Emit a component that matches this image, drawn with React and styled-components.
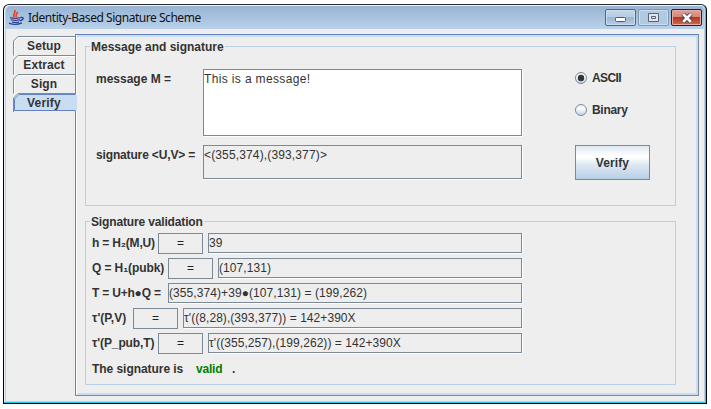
import React from "react";
import styled, { createGlobalStyle } from "styled-components";

const Global = createGlobalStyle`
  * { box-sizing: border-box; }
  body { margin: 0; background: #fff; overflow: hidden; }
`;

const Desktop = styled.div`
  width: 711px;
  height: 409px;
  padding: 4px 0 0 3px;
  background: #fff;
`;

const Frame = styled.div`
  width: 704px;
  height: 400px;
  display: flex;
  flex-direction: column;
  border: 1px solid #000;
  border-top-color: #2b2b2b;
  border-radius: 6px 6px 0 0;
  background: #b9d1ea;
  box-shadow: inset -1px -1px 0 #2ac6e6, inset 1px 1px 0 #e8f1fa;
  padding: 1px 2px 2px 2px;
  font-family: "Liberation Sans", Arial, sans-serif;
  font-size: 12px;
  color: #333;
`;

const TitleBar = styled.div`
  height: 23px;
  flex: none;
  display: flex;
  align-items: flex-start;
  padding: 3px 2px 0 2px;
  border-radius: 5px 5px 0 0;
  background: linear-gradient(#98b4d2, #b9d1ea);
`;

const Title = styled.div`
  flex: 1;
  margin-left: 3px;
  font: 12px/17px "Noto Sans", "Open Sans", sans-serif;
  letter-spacing: ${(p) => p.$ls}px;
  color: #111;
  white-space: nowrap;
`;

const CaptionButton = styled.div`
  width: 31px;
  height: 17px;
  margin-left: 2px;
  padding-top: ${(p) => (p.$kind === "min" ? 4 : 0)}px;
  display: flex;
  align-items: center;
  justify-content: center;
  border: 1px solid ${(p) => (p.$kind === "close" ? "#431422" : p.$kind === "max" ? "#8299b4" : "#53667f")};
  border-radius: 2px;
  box-shadow: inset 0 0 0 1px ${(p) => (p.$kind === "close" ? "#e6aba3" : "#cbdcef")};
  background: ${(p) =>
    p.$kind === "close"
      ? "linear-gradient(#e2a096 0%, #d58577 48%, #b8371d 50%, #cf6a50 100%)"
      : p.$kind === "max"
        ? "#b1cae4"
        : "linear-gradient(#c3d5e9 0%, #b6cce4 48%, #9bb6d3 50%, #b4cde7 100%)"};
`;

const Client = styled.div`
  flex: 1;
  display: flex;
  padding: 5px 5px 5px 7px;
  background: #eee;
`;

const TabList = styled.div`
  width: 62px;
  flex: none;
  padding-top: 2px;
`;

const Tab = styled.div`
  position: relative;
  height: 19px;
  line-height: 18px;
  padding-top: 1px;
  text-align: center;
  font-weight: bold;
`;

const TabShape = styled.svg`
  position: absolute;
  left: 0;
  top: 0;
  overflow: visible;
`;

const TabText = styled.span`
  position: relative;
  letter-spacing: ${(p) => p.$ls}px;
`;

const Pane = styled.div`
  flex: 1;
  display: flex;
  flex-direction: column;
  gap: 13px;
  padding: 9px 22px 0 8px;
  border: 1px solid #7a8a99;
  border-top-color: #6382bf;
  border-left-color: #6382bf;
  box-shadow: inset 1px 0 0 #fff, inset 0 2px 0 #c8ddf2, inset -2px -2px 0 #c8ddf2;
`;

const Group = styled.section`
  height: ${(p) => p.$h}px;
  flex: none;
  margin-top: 2px;
  margin-left: 1px;
  border: 1px solid #b8cfe5;
`;

const GroupTitle = styled.h2`
  width: max-content;
  height: 14px;
  margin: -7px 0 0 4px;
  padding: 0 1px;
  background: #eee;
  font-size: 12px;
  line-height: 14px;
  white-space: nowrap;
  letter-spacing: ${(p) => p.$ls}px;
`;

const MessageGrid = styled.div`
  display: grid;
  grid-template-columns: 107px 320px 52px 76px;
  grid-template-rows: 68px 35px;
  row-gap: 8px;
  margin: 15px 0 0 10px;
`;

const Label = styled.span`
  font-weight: bold;
  line-height: 14px;
  white-space: nowrap;
  letter-spacing: ${(p) => p.$ls || 0}px;
  color: ${(p) => p.$color || "#333"};
`;

const GridLabel = styled(Label)`
  grid-column: 1;
  padding-top: 3px;
`;

const Field = styled.div`
  border: 1px solid #7a8a99;
  box-shadow: 1px 1px 0 #fff;
  margin: 0 1px 1px 0;
  line-height: 18px;
  background: ${(p) => (p.$editable ? "#fff" : "#eee")};
  letter-spacing: ${(p) => p.$ls || 0}px;
  white-space: nowrap;
`;

const Radios = styled.div`
  grid-column: 4;
  display: flex;
  flex-direction: column;
  gap: 18px;
  padding-top: 2px;
`;

const Radio = styled.div`
  height: 14px;
  display: flex;
  align-items: center;
  gap: 5px;
`;

const VerifyButton = styled.button`
  grid-column: 4;
  width: 75px;
  height: 35px;
  padding: 0;
  border: 1px solid #7a8a99;
  background: linear-gradient(#dde8f3 0%, #fff 30%, #fff 34%, #dce7f2 58%, #b8cfe5 100%);
  font: bold 12px "Liberation Sans", Arial, sans-serif;
  letter-spacing: ${(p) => p.$ls}px;
  color: #333;
`;

const Rows = styled.div`
  display: flex;
  flex-direction: column;
  gap: 5px;
  margin: 4px 0 0 6px;
`;

const Row = styled.div`
  width: 431px;
  height: 20px;
  display: grid;
  grid-template-columns: ${(p) => p.$cols};
`;

const RowLabel = styled(Label)`
  padding-top: 3px;
`;

const EqualsBox = styled.div`
  width: 45px;
  border: 1px solid #7a8a99;
  line-height: 19px;
  text-align: center;
  color: #222;
`;

const Verdict = styled.div`
  height: 20px;
  display: grid;
  grid-template-columns: 104px 36px auto;
  padding-top: 4px;
`;

const JavaIcon = () => (
  <svg width="17" height="17" viewBox="0 0 17 17" fill="none">
    <path d="M6.5 8.5C3.8 6 8 4.5 6.8 1M8.6 8.5C6.6 6.7 9.4 5.2 9.2 3" stroke="#e5432f" strokeWidth="1.7" />
    <path d="M2 8.5h10.5l-1 4.5H4z" fill="#d8dcef" />
    <path d="M2 8.7q5 1.5 10.5 0M2.8 10.7q4.7 1.5 9 0M4 12.8q3.5 1.2 7 0M12.5 8.6c3.7-1.2 3.7 2.4-.8 3.2M1 14.2q6.5 2.6 13-.3" stroke="#2c3f8c" strokeWidth="1.3" />
  </svg>
);

const RadioMark = ({ on }) => (
  <svg width="12" height="12" viewBox="0 0 12 12">
    <defs>
      <linearGradient id="radioFill" x1="0" y1="0" x2="0" y2="1">
        <stop offset="0" stopColor="#dde8f3" />
        <stop offset=".35" stopColor="#fff" />
        <stop offset="1" stopColor="#b8cfe5" />
      </linearGradient>
    </defs>
    <circle cx="6" cy="6" r="5.5" fill="url(#radioFill)" stroke="#7a8a99" />
    {on && <circle cx="6" cy="6" r="3.2" fill="#333" />}
  </svg>
);

const tabs = [
  { name: "Setup", ls: 0.1 },
  { name: "Extract", ls: 0.1 },
  { name: "Sign", ls: 0.1 },
  { name: "Verify", ls: 0.2, selected: true },
];

const rows = [
  { label: "h = H₂(M,U)", ls: -0.2, cols: "66px 50px 1fr", eq: true, value: "39", vls: 0.1 },
  { label: "Q = H₁(pubk)", ls: -0.1, cols: "76px 50px 1fr", eq: true, value: "(107,131)", vls: 0.08 },
  { label: "T = U+h●Q =", ls: -0.2, cols: "76px 1fr", value: "(355,374)+39●(107,131) = (199,262)", vls: 0.08 },
  { label: "τ'(P,V)", ls: 0.05, cols: "41px 50px 1fr", eq: true, value: "τ'((8,28),(393,377)) = 142+390X", vls: 0.06 },
  { label: "τ'(P_pub,T)", ls: -0.1, cols: "66px 50px 1fr", eq: true, value: "τ'((355,257),(199,262)) = 142+390X", vls: 0.06 },
];

export default function App() {
  return (
    <Desktop>
      <Global />
      <Frame>
        <TitleBar>
          <JavaIcon />
          <Title $ls={-0.46}>Identity-Based Signature Scheme</Title>
          <CaptionButton $kind="min">
            <svg width="11" height="5"><rect x=".5" y=".5" width="10" height="4" rx="1" fill="#fff" stroke="#53555f" /></svg>
          </CaptionButton>
          <CaptionButton $kind="max">
            <svg width="11" height="9"><path d="M.5.5h10v8H.5zM3.5 3.5h4v2h-4z" fill="#dfe5ec" stroke="#596273" /></svg>
          </CaptionButton>
          <CaptionButton $kind="close">
            <svg width="12" height="10"><path d="M2 1l8 8M10 1l-8 8" stroke="#53555f" strokeWidth="4.6" /><path d="M2.2 1.2l7.6 7.6M9.8 1.2l-7.6 7.6" stroke="#fff" strokeWidth="2.6" /></svg>
          </CaptionButton>
        </TitleBar>
        <Client>
          <TabList>
            {tabs.map((t) => (
              <Tab key={t.name}>
                <TabShape width="64" height="20">
                  {t.selected ? (
                    <>
                      <path d="M.5 19V5L5 .5H62" fill="none" stroke="#7a8a99" />
                      <path d="M1.5 17.5V6L6 1.5H64V17.5z" fill="#c8ddf2" />
                      <path d="M62 17.5H1.5V6L6 1.5H62" fill="none" stroke="#6382bf" />
                    </>
                  ) : (
                    <>
                      <path d="M1.5 19V6L6 1.5H62" fill="none" stroke="#fff" />
                      <path d="M.5 19.5V5L5 .5H62" fill="none" stroke="#7a8a99" />
                    </>
                  )}
                </TabShape>
                <TabText $ls={t.ls}>{t.name}</TabText>
              </Tab>
            ))}
          </TabList>
          <Pane>
            <Group $h={160}>
              <GroupTitle $ls={0}>Message and signature</GroupTitle>
              <MessageGrid>
                <GridLabel $ls={0}>message M =</GridLabel>
                <Field $editable $ls={0.36}>This is a message!</Field>
                <Radios>
                  <Radio><RadioMark on /><Label $ls={-0.6}>ASCII</Label></Radio>
                  <Radio><RadioMark /><Label $ls={-0.3}>Binary</Label></Radio>
                </Radios>
                <GridLabel $ls={-0.15}>signature &lt;U,V&gt; =</GridLabel>
                <Field $ls={0.14}>&lt;(355,374),(393,377)&gt;</Field>
                <VerifyButton $ls={0.1}>Verify</VerifyButton>
              </MessageGrid>
            </Group>
            <Group $h={164}>
              <GroupTitle $ls={-0.15}>Signature validation</GroupTitle>
              <Rows>
                {rows.map((r) => (
                  <Row key={r.label} $cols={r.cols}>
                    <RowLabel $ls={r.ls}>{r.label}</RowLabel>
                    {r.eq && <EqualsBox>=</EqualsBox>}
                    <Field $ls={r.vls}>{r.value}</Field>
                  </Row>
                ))}
                <Verdict>
                  <Label $ls={-0.05}>The signature is</Label>
                  <Label $color="#008000" $ls={-0.2}>valid</Label>
                  <Label>.</Label>
                </Verdict>
              </Rows>
            </Group>
          </Pane>
        </Client>
      </Frame>
    </Desktop>
  );
}
